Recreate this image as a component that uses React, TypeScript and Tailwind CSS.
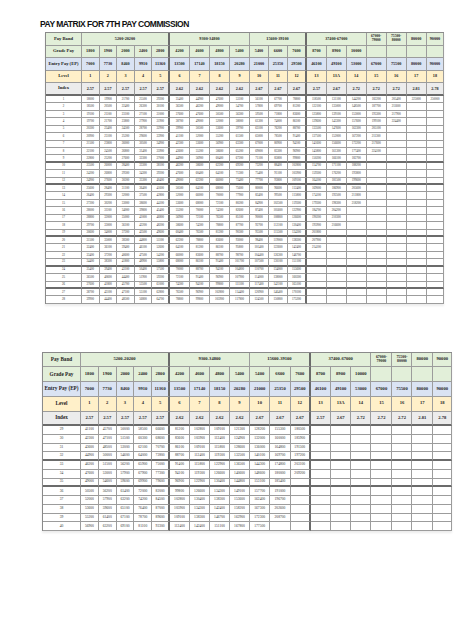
import React from 'react';

const LEVELS = ['1', '2', '3', '4', '5', '6', '7', '8', '9', '10', '11', '12', '13', '13A', '14', '15', '16', '17', '18'];

const BANDS = [
  { t: '5200-20200', span: 'col-span-5', end: 4 },
  { t: '9300-34800', span: 'col-span-4', end: 8 },
  { t: '15600-39100', span: 'col-span-3', end: 11 },
  { t: '37400-67000', span: 'col-span-3', end: 14 },
  { t: '67000-\n79000', span: 'col-span-1', end: 15 },
  { t: '75500-\n80000', span: 'col-span-1', end: 16 },
  { t: '80000', span: 'col-span-1', end: 17 },
  { t: '90000', span: 'col-span-1', end: 18 },
];

const GRADE = ['1800', '1900', '2000', '2400', '2800', '4200', '4600', '4800', '5400', '5400', '6600', '7600', '8700', '8900', '10000', '', '', '', ''];
const ENTRY = ['7000', '7730', '8460', '9910', '11360', '13500', '17140', '18150', '20280', '21000', '25350', '29500', '46100', '49100', '53000', '67000', '75500', '80000', '90000'];
const INDEX = ['2.57', '2.57', '2.57', '2.57', '2.57', '2.62', '2.62', '2.62', '2.62', '2.67', '2.67', '2.67', '2.57', '2.67', '2.72', '2.72', '2.72', '2.81', '2.78'];

// pay cells per level, row 1 first
const PAY: number[][] = [
  [18000, 18500, 19100, 19700, 20300, 20900, 21500, 22100, 22800, 23500, 24200, 24900, 25600, 26400, 27200, 28000, 28800, 29700, 30600, 31500, 32400, 33400, 34400, 35400, 36500, 37600, 38700, 39900, 41100, 42300, 43600, 44900, 46200, 47600, 49000, 50500, 52000, 53600, 55200, 56900],
  [19900, 20500, 21100, 21700, 22400, 23100, 23800, 24500, 25200, 26000, 26800, 27600, 28400, 29300, 30200, 31100, 32000, 33000, 34000, 35000, 36100, 37200, 38300, 39400, 40600, 41800, 43100, 44400, 45700, 47100, 48500, 50000, 51500, 53000, 54600, 56200, 57900, 59600, 61400, 63200],
  [21700, 22400, 23100, 23800, 24500, 25200, 26000, 26800, 27600, 28400, 29300, 30200, 31100, 32000, 33000, 34000, 35000, 36100, 37200, 38300, 39400, 40600, 41800, 43100, 44400, 45700, 47100, 48500, 50000, 51500, 53000, 54600, 56200, 57900, 59600, 61400, 63200, 65100, 67100, 69100],
  [25500, 26300, 27100, 27900, 28700, 29600, 30500, 31400, 32300, 33300, 34300, 35300, 36400, 37500, 38600, 39800, 41000, 42200, 43500, 44800, 46100, 47500, 48900, 50400, 51900, 53500, 55100, 56800, 58500, 60300, 62100, 64000, 65900, 67900, 69900, 72000, 74200, 76400, 78700, 81100],
  [29200, 30100, 31000, 31900, 32900, 33900, 34900, 35900, 37000, 38100, 39200, 40400, 41600, 42800, 44100, 45400, 46800, 48200, 49600, 51100, 52600, 54200, 55800, 57500, 59200, 61000, 62800, 64700, 66600, 68600, 70700, 72800, 75000, 77300, 79600, 82000, 84500, 87000, 89600, 92300],
  [35400, 36500, 37600, 38700, 39900, 41100, 42300, 43600, 44900, 46200, 47600, 49000, 50500, 52000, 53600, 55200, 56900, 58600, 60400, 62200, 64100, 66000, 68000, 70000, 72100, 74300, 76500, 78800, 81200, 83600, 86100, 88700, 91400, 94100, 96900, 99800, 102800, 105900, 109100, 112400],
  [44900, 46200, 47600, 49000, 50500, 52000, 53600, 55200, 56900, 58600, 60400, 62200, 64100, 66000, 68000, 70000, 72100, 74300, 76500, 78800, 81200, 83600, 86100, 88700, 91400, 94100, 96900, 99800, 102800, 105900, 109100, 112400, 115800, 119300, 122900, 126600, 130400, 134300, 138300, 142400],
  [47600, 49000, 50500, 52000, 53600, 55200, 56900, 58600, 60400, 62200, 64100, 66000, 68000, 70000, 72100, 74300, 76500, 78800, 81200, 83600, 86100, 88700, 91400, 94100, 96900, 99800, 102800, 105900, 109100, 112400, 115800, 119300, 122900, 126600, 130400, 134300, 138300, 142400, 146700, 151100],
  [53100, 54700, 56300, 58000, 59700, 61500, 63300, 65200, 67200, 69200, 71300, 73400, 75600, 77900, 80200, 82600, 85100, 87700, 90300, 93000, 95800, 98700, 101700, 104800, 107900, 111100, 114400, 117800, 121300, 124900, 128600, 132500, 136500, 140600, 144800, 149100, 153600, 158200, 162900, 167800],
  [56100, 57800, 59500, 61300, 63100, 65000, 67000, 69000, 71100, 73200, 75400, 77700, 80000, 82400, 84900, 87400, 90000, 92700, 95500, 98400, 101400, 104400, 107500, 110700, 114000, 117400, 120900, 124500, 128200, 132000, 136000, 140100, 144300, 148600, 153100, 157700, 162400, 167300, 172300, 177500],
  [67700, 69700, 71800, 74000, 76200, 78500, 80900, 83300, 85800, 88400, 91100, 93800, 96600, 99500, 102500, 105600, 108800, 112100, 115500, 119000, 122600, 126300, 130100, 134000, 138000, 142100, 146400, 150800, 155300, 160000, 164800, 169700, 174800, 180000, 185400, 191000, 196700, 202600, 208700],
  [78800, 81200, 83600, 86100, 88700, 91400, 94100, 96900, 99800, 102800, 105900, 109100, 112400, 115800, 119300, 122900, 126600, 130400, 134300, 138300, 142400, 146700, 151100, 155600, 160300, 165100, 170100, 175200, 180500, 185900, 191500, 197200, 203100, 209200],
  [118500, 122100, 125800, 129600, 133500, 137500, 141600, 145800, 150200, 154700, 159300, 164100, 169000, 174100, 179300, 184700, 190200, 195900, 201800, 207900, 214100],
  [131100, 135000, 139100, 143300, 147600, 152000, 156600, 161300, 166100, 171100, 176200, 181500, 186900, 192500, 198300, 204200, 210300, 216600],
  [144200, 148500, 153000, 157600, 162300, 167200, 172200, 177400, 182700, 188200, 193800, 199600, 205600, 211800, 218200],
  [182200, 187700, 193300, 199100, 205100, 211300, 217600, 224100],
  [205400, 211600, 217900, 224400],
  [225000],
  [250000],
];

// heavier rule after the last column of a pay band
const THICK_RIGHT = new Set([4, 11]);

type TableProps = {
  gridClass: string;
  labelText: string;
  numText: string;
  bandText: string;
  dataText: string;
  from: number;
  to: number;
  thickAfter: number[];
};

function PayTable({ gridClass, labelText, numText, bandText, dataText, from, to, thickAfter }: TableProps) {
  const cell = 'flex items-center justify-center text-center leading-none border-r border-b border-[#9c9c9c] overflow-hidden whitespace-nowrap min-h-0';
  const right = (i: number) => (THICK_RIGHT.has(i) ? 'border-r-2 border-r-[#6b6b6b]' : '');
  const rows: number[] = [];
  for (let r = from; r <= to; r++) rows.push(r);

  const headRow = (label: string, values: string[], bg: string, extra = '') => (
    <>
      <div className={`${cell} ${bg} ${labelText} font-bold ${extra}`}>{label}</div>
      {values.map((v, i) => (
        <div key={label + i} className={`${cell} ${bg} ${right(i)} ${numText} font-bold ${extra}`}>
          {v}
        </div>
      ))}
    </>
  );

  return (
    <div className={`grid bg-white border-l border-t border-[#8a8a8a] shadow-[0_2px_2px_rgba(0,0,0,0.08)] font-['Liberation_Serif',serif] text-[#222] ${gridClass}`}>
      <div className={`${cell} bg-[#e2efd9] ${labelText} font-bold`}>Pay Band</div>
      {BANDS.map((b, i) => (
        <div
          key={i}
          className={`${cell} ${b.span} bg-[#e2efd9] ${right(b.end)} ${b.t.includes('\n') ? bandText : numText} font-bold whitespace-pre-line`}
        >
          {b.t}
        </div>
      ))}
      {headRow('Grade Pay', GRADE, 'bg-[#e2efd9]')}
      {headRow('Entry Pay (EP)', ENTRY, 'bg-[#dae3f3]')}
      {headRow('Level', LEVELS, 'bg-[#fff0c9]')}
      {headRow('Index', INDEX, 'bg-[#ececec]', 'border-b-2 border-b-[#6b6b6b]')}
      {rows.map((r) => {
        const thick = thickAfter.includes(r) ? 'border-b-2 border-b-[#6b6b6b]' : '';
        return (
          <React.Fragment key={r}>
            <div className={`${cell} ${dataText} ${thick}`}>{r}</div>
            {PAY.map((lvl, i) => (
              <div key={i} className={`${cell} ${right(i)} ${dataText} ${thick}`}>
                {lvl[r - 1] ?? ''}
              </div>
            ))}
          </React.Fragment>
        );
      })}
    </div>
  );
}

export default function App() {
  return (
    <div className="w-[474px] h-[632px] bg-white overflow-hidden pt-[19px]">
      <div className="pl-[40px] h-[10px] leading-[10px] text-[8.5px] font-bold tracking-[-0.5px] text-[#111] font-['Liberation_Sans',Arial,sans-serif]">
        PAY MATRIX FOR 7TH PAY COMMISSION
      </div>
      <div className="mt-[3px] pl-[45px] flex">
        <PayTable
          gridClass="grid-cols-[36px_repeat(5,17.6px)_repeat(4,20px)_repeat(3,19px)_repeat(3,19.9px)_20px_20px_20px_17.6px] grid-rows-[repeat(5,12.6px)_repeat(28,7.43px)]"
          labelText="text-[4.6px]"
          numText="text-[4.2px]"
          bandText="text-[3.6px]"
          dataText="text-[3px] text-[#333]"
          from={1}
          to={28}
          thickAfter={[9, 12, 19, 23, 26]}
        />
      </div>
      <div className="mt-[48px] pl-[42px] flex">
        <PayTable
          gridClass="grid-cols-[38px_repeat(5,17.8px)_repeat(4,20px)_repeat(3,20.3px)_repeat(3,20.2px)_21px_20px_20.6px_19.4px] grid-rows-[repeat(5,14.7px)_repeat(12,8.75px)]"
          labelText="text-[5.2px]"
          numText="text-[4.6px]"
          bandText="text-[3.9px]"
          dataText="text-[3.6px] text-[#333]"
          from={29}
          to={40}
          thickAfter={[32, 35]}
        />
      </div>
    </div>
  );
}
